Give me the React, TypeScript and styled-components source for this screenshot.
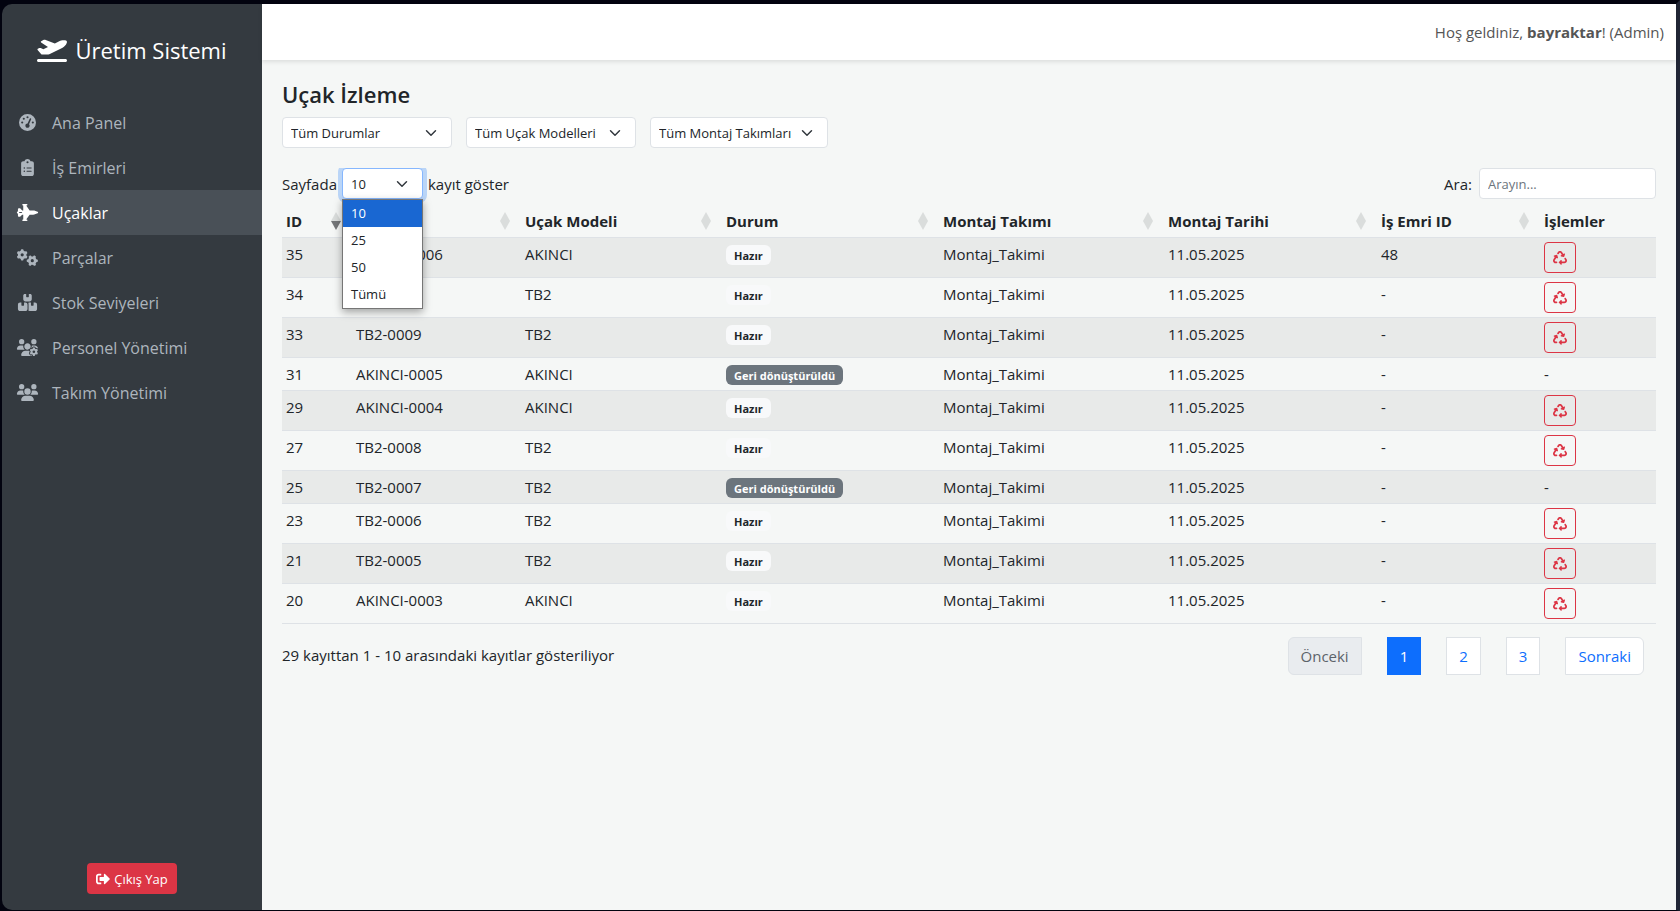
import React, { useState } from "react";
import styled, { createGlobalStyle, css } from "styled-components";
import {
  FaPlaneDeparture,
  FaGaugeHigh,
  FaClipboardList,
  FaJetFighter,
  FaGears,
  FaBoxesStacked,
  FaUsersGear,
  FaUsers,
  FaRecycle,
} from "react-icons/fa6";
import { FaSignOutAlt } from "react-icons/fa";

const GlobalStyle = createGlobalStyle`
  *, *::before, *::after { box-sizing: border-box; }
  body {
    margin: 0;
    background: #02030f;
    color: #212529;
    font-family: "Segoe UI", "Open Sans", "Noto Sans", sans-serif;
    font-size: 15px;
    line-height: 24px;
  }
  button, input, select { font: inherit; color: inherit; margin: 0; }
`;

const Shell = styled.div`
  display: grid;
  grid-template-columns: 260px minmax(0, 1fr);
  min-height: 100vh;
  border: solid #02030f;
  border-width: 4px 4px 1px 2px;
  border-right-color: #212636;
`;

const Sidebar = styled.aside`
  display: flex;
  flex-direction: column;
  padding: 20px 0 16px;
  background: #343a40;
  border-radius: 10px 0 0 10px;
  color: #fff;
`;

const Brand = styled.div`
  display: flex;
  align-items: center;
  justify-content: center;
  gap: 8px;
  height: 52px;
  margin-bottom: 24px;
  font-size: 22px;

  svg {
    width: 30px;
    height: 24px;
  }
`;

const Nav = styled.nav`
  display: flex;
  flex-direction: column;
`;

const NavLink = styled.a<{ $active?: boolean }>`
  display: flex;
  align-items: center;
  gap: 13px;
  height: 45px;
  padding: 0 14px;
  font-size: 16px;
  text-decoration: none;
  color: ${(p) => (p.$active ? "#fff" : "#adb5bd")};
  background: ${(p) => (p.$active ? "#495057" : "transparent")};

  svg {
    width: 23px;
    height: 17px;
  }
`;

const LogoutButton = styled.button`
  display: flex;
  align-items: center;
  align-self: center;
  gap: 4px;
  height: 31px;
  margin-top: auto;
  padding: 0 9px;
  border: 0;
  border-radius: 4px;
  background: #dc3545;
  color: #fff;
  font-size: 13px;

  svg {
    width: 14px;
    height: 14px;
  }
`;

const Main = styled.div`
  display: flex;
  flex-direction: column;
  min-width: 0;
  background: #f5f7f6;
`;

const TopBar = styled.header`
  display: flex;
  justify-content: flex-end;
  height: 56px;
  padding: 16px 12px;
  background: #fff;
  color: #555;
  box-shadow: 0 2px 4px rgba(0, 0, 0, 0.1);
`;

const Content = styled.main`
  padding: 20px;
`;

const Title = styled.h1`
  margin: 0 0 8px;
  font-size: 22px;
  font-weight: 600;
  line-height: 29px;
`;

const Filters = styled.div`
  display: flex;
  gap: 14px;
  margin-bottom: 20px;
`;

const chevron = css`
  background: #fff
    url("data:image/svg+xml,%3csvg xmlns='http://www.w3.org/2000/svg' viewBox='0 0 16 16'%3e%3cpath fill='none' stroke='%23343a40' stroke-linecap='round' stroke-linejoin='round' stroke-width='2' d='m2 5 6 6 6-6'/%3e%3c/svg%3e")
    no-repeat right 12px center / 16px 12px;
`;

const Select = styled.select<{ $width: number; $open?: boolean }>`
  ${chevron}
  appearance: none;
  width: ${(p) => p.$width}px;
  height: 31px;
  padding: 0 30px 0 8px;
  border: 1px solid #dee2e6;
  border-radius: 4px;
  outline: 0;
  font-size: 13px;
  ${(p) =>
    p.$open &&
    css`
      border-color: #86b7fe;
      box-shadow: 0 0 0 4px rgba(13, 110, 253, 0.25);
      clip-path: inset(0 -4px -4px -4px);
    `}
`;

const TableTools = styled.div`
  display: flex;
  align-items: center;
  justify-content: space-between;
  height: 31px;
  margin-bottom: 6px;
`;

const Field = styled.div`
  display: flex;
  align-items: center;
  gap: 5px;
`;

const MenuAnchor = styled.div`
  position: relative;
  display: flex;
`;

const Menu = styled.ul`
  position: absolute;
  z-index: 1;
  top: 100%;
  left: 0;
  right: 0;
  margin: 0;
  padding: 0;
  border: 1px solid #767676;
  background: #fff;
  box-shadow: 0 3px 8px rgba(0, 0, 0, 0.35);
  list-style: none;
  font-size: 13px;
  line-height: 27px;
`;

const MenuItem = styled.li<{ $selected: boolean }>`
  padding: 0 8px;
  background: ${(p) => (p.$selected ? "#1967d2" : "#fff")};
  color: ${(p) => (p.$selected ? "#fff" : "#212529")};
`;

const SearchInput = styled.input`
  width: 177px;
  height: 31px;
  margin-left: 2px;
  padding: 0 8px;
  border: 1px solid #dee2e6;
  border-radius: 4px;
  background: #fff;
  font-size: 13px;

  &::placeholder {
    color: #6c757d;
    opacity: 1;
  }
`;

const Table = styled.table`
  width: 100%;
  table-layout: fixed;
  border-collapse: separate;
  border-spacing: 0;
`;

const HeadCell = styled.th`
  height: 33px;
  padding: 4px;
  border-bottom: 1px solid #dee2e6;
  text-align: left;
  font-weight: 700;
`;

const SortButton = styled.button`
  display: flex;
  align-items: center;
  justify-content: space-between;
  width: 100%;
  height: 24px;
  padding: 0 7px 0 0;
  border: 0;
  background: none;
  font-weight: 700;
  white-space: nowrap;
`;

const Row = styled.tr`
  &:nth-child(odd) {
    background: #e8eae9;
  }
`;

const Cell = styled.td`
  padding: 4px;
  border-bottom: 1px solid #dee2e6;
  vertical-align: top;
`;

const Badge = styled.span<{ $muted: boolean }>`
  display: block;
  width: fit-content;
  height: 20px;
  margin-top: 3px;
  padding: 0 8px;
  border-radius: 6px;
  background: ${(p) => (p.$muted ? "#6c757d" : "#f8f9fa")};
  color: ${(p) => (p.$muted ? "#fff" : "#212529")};
  font-size: 11px;
  font-weight: 700;
  line-height: 21px;
`;

const RecycleButton = styled.button`
  display: grid;
  place-items: center;
  width: 32px;
  height: 31px;
  padding: 0;
  border: 1px solid #dc3545;
  border-radius: 4px;
  background: transparent;
  color: #dc3545;

  svg {
    width: 14px;
    height: 14px;
  }
`;

const TableFooter = styled.footer`
  display: flex;
  justify-content: space-between;
  padding: 13px 12px 0 0;
`;

const Info = styled.div`
  padding-top: 6px;
`;

const Pagination = styled.nav`
  display: flex;
  gap: 25px;
`;

const PageButton = styled.button<{ $state?: "active" | "disabled"; $edge?: "start" | "end" }>`
  height: 38px;
  padding: 0 12px;
  border: 1px solid #dee2e6;
  border-radius: ${(p) => (p.$edge === "start" ? "6px 0 0 6px" : p.$edge === "end" ? "0 6px 6px 0" : "0")};
  background: #fff;
  color: #0d6efd;
  ${(p) =>
    p.$state === "active" &&
    css`
      border-color: #0d6efd;
      background: #0d6efd;
      color: #fff;
    `}
  ${(p) =>
    p.$state === "disabled" &&
    css`
      background: #e9ecef;
      color: #5c636a;
    `}
`;

const SortIcon = ({ desc }: { desc?: boolean }) => (
  <svg width="10" height="18" viewBox="0 0 10 18" aria-hidden="true">
    <path d="M5 0 10 9H0Z" fill="#dadddc" />
    <path d="M0 9h10L5 18Z" fill={desc ? "#747678" : "#dadddc"} />
  </svg>
);

const links = [
  { label: "Ana Panel", icon: <FaGaugeHigh /> },
  { label: "İş Emirleri", icon: <FaClipboardList /> },
  { label: "Uçaklar", icon: <FaJetFighter />, active: true },
  { label: "Parçalar", icon: <FaGears /> },
  { label: "Stok Seviyeleri", icon: <FaBoxesStacked /> },
  { label: "Personel Yönetimi", icon: <FaUsersGear /> },
  { label: "Takım Yönetimi", icon: <FaUsers /> },
];

const columns = [
  { label: "ID", width: 70 },
  { label: "Seri No", width: 169 },
  { label: "Uçak Modeli", width: 201 },
  { label: "Durum", width: 217 },
  { label: "Montaj Takımı", width: 225 },
  { label: "Montaj Tarihi", width: 213 },
  { label: "İş Emri ID", width: 163 },
];

const aircraft = [
  { id: 35, tail: "AKINCI-0006", ready: true, order: "48" },
  { id: 34, tail: "TB2-0010", ready: true, order: "-" },
  { id: 33, tail: "TB2-0009", ready: true, order: "-" },
  { id: 31, tail: "AKINCI-0005", ready: false, order: "-" },
  { id: 29, tail: "AKINCI-0004", ready: true, order: "-" },
  { id: 27, tail: "TB2-0008", ready: true, order: "-" },
  { id: 25, tail: "TB2-0007", ready: false, order: "-" },
  { id: 23, tail: "TB2-0006", ready: true, order: "-" },
  { id: 21, tail: "TB2-0005", ready: true, order: "-" },
  { id: 20, tail: "AKINCI-0003", ready: true, order: "-" },
];

const pageSizes = ["10", "25", "50", "Tümü"];

export default function App() {
  const [pageSize, setPageSize] = useState("10");
  const [open, setOpen] = useState(true);

  return (
    <>
      <GlobalStyle />
      <Shell>
        <Sidebar>
          <Brand>
            <FaPlaneDeparture />
            Üretim Sistemi
          </Brand>
          <Nav>
            {links.map((l) => (
              <NavLink key={l.label} href="#" $active={l.active}>
                {l.icon}
                {l.label}
              </NavLink>
            ))}
          </Nav>
          <LogoutButton type="button">
            <FaSignOutAlt />
            Çıkış Yap
          </LogoutButton>
        </Sidebar>
        <Main>
          <TopBar>
            <span>
              Hoş geldiniz, <b>bayraktar</b>! (Admin)
            </span>
          </TopBar>
          <Content>
            <Title>Uçak İzleme</Title>
            <Filters>
              <Select $width={170} aria-label="Durum">
                <option>Tüm Durumlar</option>
              </Select>
              <Select $width={170} aria-label="Uçak modeli">
                <option>Tüm Uçak Modelleri</option>
              </Select>
              <Select $width={178} aria-label="Montaj takımı">
                <option>Tüm Montaj Takımları</option>
              </Select>
            </Filters>
            <TableTools>
              <Field>
                <label htmlFor="page-size">Sayfada</label>
                <MenuAnchor>
                  <Select
                    id="page-size"
                    $width={81}
                    $open={open}
                    value={pageSize}
                    onChange={(e) => setPageSize(e.target.value)}
                  >
                    {pageSizes.map((s) => (
                      <option key={s}>{s}</option>
                    ))}
                  </Select>
                  {open && (
                    <Menu role="listbox" aria-label="Sayfadaki kayıt sayısı">
                      {pageSizes.map((s) => (
                        <MenuItem
                          key={s}
                          role="option"
                          aria-selected={s === pageSize}
                          $selected={s === pageSize}
                          onClick={() => {
                            setPageSize(s);
                            setOpen(false);
                          }}
                        >
                          {s}
                        </MenuItem>
                      ))}
                    </Menu>
                  )}
                </MenuAnchor>
                <span>kayıt göster</span>
              </Field>
              <Field>
                <label htmlFor="search">Ara:</label>
                <SearchInput id="search" type="search" placeholder="Arayın..." />
              </Field>
            </TableTools>
            <Table>
              <colgroup>
                {columns.map((c) => (
                  <col key={c.label} width={c.width} />
                ))}
                <col width={116} />
              </colgroup>
              <thead>
                <tr>
                  {columns.map((c, i) => (
                    <HeadCell key={c.label} scope="col">
                      <SortButton type="button">
                        {c.label}
                        <SortIcon desc={i === 0} />
                      </SortButton>
                    </HeadCell>
                  ))}
                  <HeadCell scope="col">İşlemler</HeadCell>
                </tr>
              </thead>
              <tbody>
                {aircraft.map((a) => (
                  <Row key={a.id}>
                    <Cell>{a.id}</Cell>
                    <Cell>{a.tail}</Cell>
                    <Cell>{a.tail.split("-")[0]}</Cell>
                    <Cell>
                      <Badge $muted={!a.ready}>{a.ready ? "Hazır" : "Geri dönüştürüldü"}</Badge>
                    </Cell>
                    <Cell>Montaj_Takimi</Cell>
                    <Cell>11.05.2025</Cell>
                    <Cell>{a.order}</Cell>
                    <Cell>
                      {a.ready ? (
                        <RecycleButton type="button" aria-label="Geri dönüştür">
                          <FaRecycle />
                        </RecycleButton>
                      ) : (
                        "-"
                      )}
                    </Cell>
                  </Row>
                ))}
              </tbody>
            </Table>
            <TableFooter>
              <Info>29 kayıttan 1 - 10 arasındaki kayıtlar gösteriliyor</Info>
              <Pagination aria-label="Sayfalar">
                <PageButton type="button" disabled $state="disabled" $edge="start">
                  Önceki
                </PageButton>
                <PageButton type="button" $state="active">
                  1
                </PageButton>
                <PageButton type="button">2</PageButton>
                <PageButton type="button">3</PageButton>
                <PageButton type="button" $edge="end">
                  Sonraki
                </PageButton>
              </Pagination>
            </TableFooter>
          </Content>
        </Main>
      </Shell>
    </>
  );
}
